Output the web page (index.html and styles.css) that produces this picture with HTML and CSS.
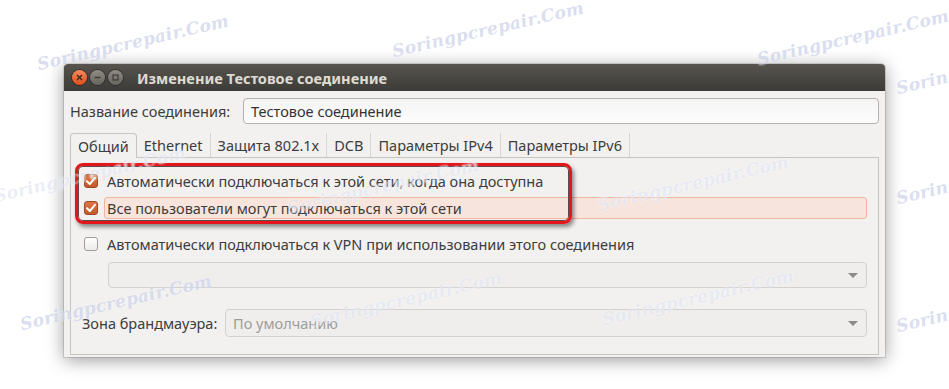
FILE: index.html
```html
<!DOCTYPE html>
<html lang="ru">
<head>
    <meta charset="UTF-8">
    <title>Изменение Тестовое соединение</title>
    <link rel="stylesheet" href="styles.css">
</head>
<body>
<div class="stage">

    <div class="window">
        <div class="titlebar">
            <div class="wm-buttons">
                <span class="wm-btn wm-close">
                    <svg width="15" height="15" viewBox="0 0 15 15"><path d="M5 5 L10 10 M10 5 L5 10" stroke="#3a2a20" stroke-width="1.4" fill="none"/></svg>
                </span>
                <span class="wm-btn">
                    <svg width="15" height="15" viewBox="0 0 15 15"><path d="M4.5 7.5 H10.5" stroke="#3c3b37" stroke-width="1.5"/></svg>
                </span>
                <span class="wm-btn">
                    <svg width="15" height="15" viewBox="0 0 15 15"><rect x="5" y="5" width="5" height="5" stroke="#3c3b37" stroke-width="1.2" fill="none"/></svg>
                </span>
            </div>
            <span class="title">Изменение Тестовое соединение</span>
        </div>

        <div class="content">
            <div class="name-row">
                <label class="name-label" for="conn-name">Название соединения:</label>
                <div class="entry" id="conn-name">Тестовое соединение</div>
            </div>

            <div class="tabs">
                <span class="tab active">Общий</span>
                <span class="tab">Ethernet</span>
                <span class="tab">Защита 802.1x</span>
                <span class="tab">DCB</span>
                <span class="tab">Параметры IPv4</span>
                <span class="tab">Параметры IPv6</span>
            </div>

            <div class="page">
                <div class="check-row">
                    <span class="check checked">
                        <svg width="14" height="14" viewBox="0 0 14 14"><path d="M3 7.2 L5.8 10 L11 3.8" stroke="#fff" stroke-width="2" fill="none" stroke-linecap="round" stroke-linejoin="round"/></svg>
                    </span>
                    <span class="check-label">Автоматически подключаться к этой сети, когда она доступна</span>
                </div>
                <div class="check-row">
                    <span class="check checked">
                        <svg width="14" height="14" viewBox="0 0 14 14"><path d="M3 7.2 L5.8 10 L11 3.8" stroke="#fff" stroke-width="2" fill="none" stroke-linecap="round" stroke-linejoin="round"/></svg>
                    </span>
                    <span class="check-label focused">Все пользователи могут подключаться к этой сети</span>
                </div>

                <div class="check-row vpn-row">
                    <span class="check"></span>
                    <span class="check-label">Автоматически подключаться к VPN при использовании этого соединения</span>
                </div>
                <div class="combo disabled vpn-combo">
                    <span class="combo-text"></span>
                    <span class="arrow"></span>
                </div>

                <div class="zone-row">
                    <span class="zone-label">Зона брандмауэра:</span>
                    <div class="combo disabled">
                        <span class="combo-text">По умолчанию</span>
                        <span class="arrow"></span>
                    </div>
                </div>

                <!-- red annotation frame over the first two options -->
                <div class="annotation"></div>
            </div>
        </div>
    </div>

    <!-- site watermarks laid over the shot -->
    <div class="marks">
        <span class="mark" style="left:40px;top:53px">Soringpcrepair.Com</span>
        <span class="mark" style="left:395px;top:40px">Soringpcrepair.Com</span>
        <span class="mark" style="left:760px;top:48px">Soringpcrepair.Com</span>
        <span class="mark" style="left:899px;top:77px">Soringpcrepair.Com</span>
        <span class="mark faint" style="left:-3px;top:185px">Soringpcrepair.Com</span>
        <span class="mark faint" style="left:290px;top:197px">Soringpcrepair.Com</span>
        <span class="mark faint" style="left:600px;top:194px">Soringpcrepair.Com</span>
        <span class="mark" style="left:899px;top:187px">Soringpcrepair.Com</span>
        <span class="mark" style="left:23px;top:313px">Soringpcrepair.Com</span>
        <span class="mark faint" style="left:313px;top:310px">Soringpcrepair.Com</span>
        <span class="mark faint" style="left:605px;top:308px">Soringpcrepair.Com</span>
        <span class="mark" style="left:899px;top:315px">Soringpcrepair.Com</span>
    </div>
</div>
</body>
</html>
```

FILE: styles.css
```css
body {
    margin: 0;
    background-color: #fff;
    font-family: "Noto Sans", "Open Sans", sans-serif;
    font-size: 14.5px;
    color: #3c3c3c;
}

.stage {
    position: relative;
    width: 949px;
    height: 389px;
    overflow: hidden;
    padding: 64px 0 0 64px;
    box-sizing: border-box;
}

.window {
    width: 821px;
    background-color: #f2f1f0;
    border-radius: 4px 4px 0 0;
    box-shadow: 0 0 0 1px rgba(0, 0, 0, 0.12), 0 3px 18px rgba(0, 0, 0, 0.4);
}

/* title bar */

.titlebar {
    height: 27px;
    display: flex;
    align-items: center;
    padding-left: 8px;
    background: linear-gradient(#57544e, #3c3b37);
    border-radius: 4px 4px 0 0;
}

.wm-buttons {
    display: flex;
    gap: 3px;
    margin-right: 14px;
}

.wm-btn {
    width: 15px;
    height: 15px;
    border-radius: 50%;
    background: linear-gradient(#8f8c86, #67645e);
    box-shadow: 0 0 0 1px rgba(0, 0, 0, 0.3);
    display: flex;
}

.wm-close {
    background: linear-gradient(#f58b60, #df4d1a);
}

.title {
    font-weight: bold;
    font-size: 14.6px;
    color: #dfdbd2;
}

/* contents */

.content {
    padding: 7px 6px 2px 6px;
}

.name-row {
    display: flex;
    align-items: center;
    height: 26px;
}

.name-label {
    width: 173px;
    flex: none;
}

.entry {
    flex: 1;
    height: 26px;
    box-sizing: border-box;
    padding: 0 7px;
    line-height: 24px;
    border: 1px solid #b4b2ae;
    border-radius: 4px;
    background: linear-gradient(#f4f4f4, #fcfcfc);
    color: #333;
}

.tabs {
    display: flex;
    margin-top: 9px;
    height: 24px;
    align-items: flex-end;
}

.tab {
    position: relative;
    padding: 0 7px;
    height: 24px;
    line-height: 24px;
    border-right: 1px solid #d8d6d2;
    box-sizing: border-box;
}

.tab.active {
    padding: 0 7px;
    border: 1px solid #c6c4bf;
    border-bottom: none;
    border-radius: 4px 4px 0 0;
    background-color: #f2f1f0;
    margin-bottom: -1px;
    height: 25px;
    z-index: 1;
}

.page {
    position: relative;
    height: 198px;
    box-sizing: border-box;
    border: 1px solid #c6c4bf;
    padding: 12px 11px 0 11px;
}

.check-row {
    display: flex;
    align-items: center;
    height: 22px;
    padding-left: 2px;
    margin-bottom: 5px;
}

.vpn-row {
    margin-top: 14px;
    margin-bottom: 7px;
}

.check {
    width: 14px;
    height: 14px;
    flex: none;
    box-sizing: border-box;
    border: 1px solid #a09e99;
    border-radius: 3px;
    background: linear-gradient(#fdfdfd, #ecebe9);
    display: flex;
    margin-right: 6px;
}

.check.checked {
    border-color: #9c4a22;
    background: linear-gradient(#dc7445, #c45a2b);
}

.check svg {
    margin: -1px;
}

.check-label {
    flex: 1;
    height: 22px;
    line-height: 20px;
    box-sizing: border-box;
    border: 1px solid transparent;
    border-radius: 3px;
    padding: 0 2px;
}

.check-label.focused {
    background-color: #f7e5dd;
    border-color: #efb69d;
}

.combo {
    height: 26px;
    box-sizing: border-box;
    border: 1px solid #d3d1cd;
    border-radius: 4px;
    background-color: #efeeec;
    display: flex;
    align-items: center;
    justify-content: space-between;
    padding: 0 8px 0 7px;
    color: #9d9c9a;
}

.vpn-combo {
    margin-left: 26px;
}

.arrow {
    width: 0;
    height: 0;
    border-left: 5px solid transparent;
    border-right: 5px solid transparent;
    border-top: 5px solid #8c8b89;
}

.zone-row {
    display: flex;
    align-items: center;
    margin-top: 21px;
}

.zone-row .combo {
    flex: 1;
    height: 28px;
}

.zone-label {
    width: 143px;
    flex: none;
}

.annotation {
    position: absolute;
    left: 4px;
    top: 5px;
    width: 497px;
    height: 61px;
    box-sizing: border-box;
    border: 3px solid #e3171b;
    border-radius: 8px;
    box-shadow: inset 0 0 0 1px #5a4a48, 2px 3px 4px rgba(0, 0, 0, 0.45);
}

/* watermarks */

.marks {
    position: absolute;
    inset: 0;
    pointer-events: none;
}

.mark {
    position: absolute;
    font-family: "DejaVu Serif", serif;
    font-style: italic;
    font-weight: bold;
    font-size: 17px;
    line-height: 23px;
    letter-spacing: 0.3px;
    color: rgba(165, 175, 215, 0.42);
    text-shadow: 0 0 2px rgba(255, 255, 255, 0.8);
    transform: rotate(-13deg);
    transform-origin: left bottom;
    white-space: nowrap;
}

.mark.faint {
    color: rgba(165, 175, 215, 0.22);
}
```
